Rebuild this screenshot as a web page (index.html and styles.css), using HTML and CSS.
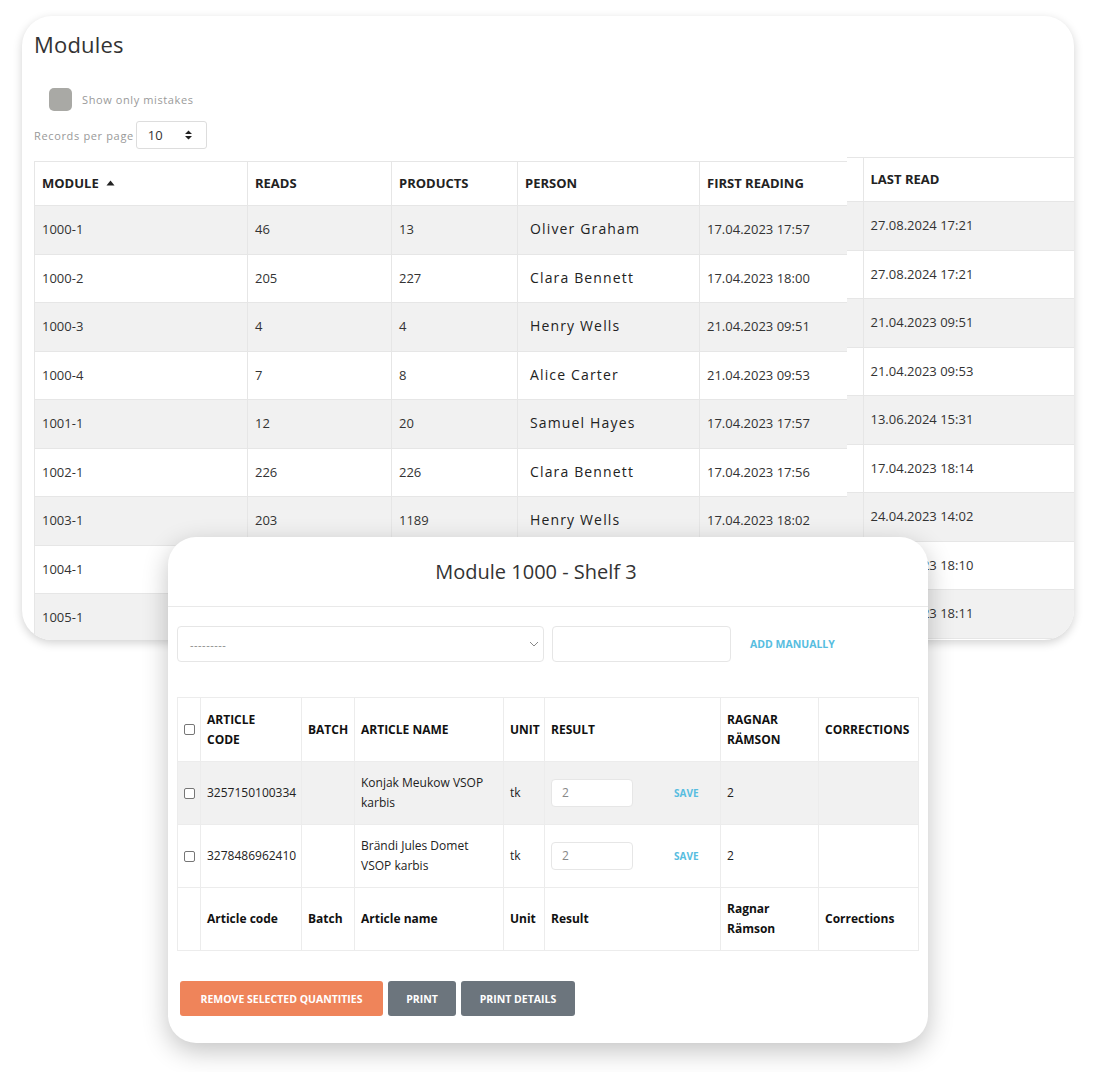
FILE: index.html
```html
<!DOCTYPE html>
<html lang="en">
<head>
<meta charset="utf-8">
<title>Modules</title>
<link rel="stylesheet" href="styles.css">
</head>
<body>
<div class="stage">
  <div class="card">
    <div class="left">
      <h1 class="title">Modules</h1>
      <div class="filter"><span class="toggle"></span><span class="filter-label">Show only mistakes</span></div>
      <div class="perpage">
        <span class="perpage-label">Records per page</span>
        <div class="num-select"><span>10</span>
          <svg class="updown" width="9" height="10" viewBox="0 0 9 10"><path d="M4.5 0.5 L8 4 H1 Z M4.5 9.5 L8 6 H1 Z" fill="#222"/></svg>
        </div>
      </div>
      <table class="grid main-grid">
        <colgroup><col class="c-module"><col class="c-reads"><col class="c-products"><col class="c-person"><col class="c-first"></colgroup>
        <thead>
          <tr><th>MODULE <svg class="sort" width="9" height="6" viewBox="0 0 9 6"><path d="M4.5 0.5 L8.5 5.5 H0.5 Z" fill="#222"/></svg></th><th>READS</th><th>PRODUCTS</th><th>PERSON</th><th>FIRST READING</th></tr>
        </thead>
        <tbody>
          <tr><td>1000-1</td><td>46</td><td>13</td><td class="person">Oliver Graham</td><td>17.04.2023 17:57</td></tr>
          <tr><td>1000-2</td><td>205</td><td>227</td><td class="person">Clara Bennett</td><td>17.04.2023 18:00</td></tr>
          <tr><td>1000-3</td><td>4</td><td>4</td><td class="person">Henry Wells</td><td>21.04.2023 09:51</td></tr>
          <tr><td>1000-4</td><td>7</td><td>8</td><td class="person">Alice Carter</td><td>21.04.2023 09:53</td></tr>
          <tr><td>1001-1</td><td>12</td><td>20</td><td class="person">Samuel Hayes</td><td>17.04.2023 17:57</td></tr>
          <tr><td>1002-1</td><td>226</td><td>226</td><td class="person">Clara Bennett</td><td>17.04.2023 17:56</td></tr>
          <tr><td>1003-1</td><td>203</td><td>1189</td><td class="person">Henry Wells</td><td>17.04.2023 18:02</td></tr>
          <tr><td>1004-1</td><td></td><td></td><td class="person"></td><td></td></tr>
          <tr><td>1005-1</td><td></td><td></td><td class="person"></td><td></td></tr>
        </tbody>
      </table>
    </div>
    <div class="right">
      <table class="grid last-grid">
        <colgroup><col class="c-gap"><col class="c-last"></colgroup>
        <thead><tr><th></th><th>LAST READ</th></tr></thead>
        <tbody>
          <tr><td></td><td>27.08.2024 17:21</td></tr>
          <tr><td></td><td>27.08.2024 17:21</td></tr>
          <tr><td></td><td>21.04.2023 09:51</td></tr>
          <tr><td></td><td>21.04.2023 09:53</td></tr>
          <tr><td></td><td>13.06.2024 15:31</td></tr>
          <tr><td></td><td>17.04.2023 18:14</td></tr>
          <tr><td></td><td>24.04.2023 14:02</td></tr>
          <tr><td></td><td>24.04.2023 18:10</td></tr>
          <tr><td></td><td>24.04.2023 18:11</td></tr>
        </tbody>
      </table>
    </div>
  </div>

  <div class="modal">
    <div class="modal-head">Module 1000 - Shelf 3</div>
    <div class="modal-body">
      <div class="form-row">
        <div class="field select-field"><span class="placeholder">---------</span>
          <svg width="10" height="6" viewBox="0 0 10 6"><path d="M1 1 L5 5 L9 1" fill="none" stroke="#888" stroke-width="1"/></svg>
        </div>
        <div class="field text-field"></div>
        <span class="link add-link">ADD MANUALLY</span>
      </div>
      <table class="items">
        <colgroup><col class="i-check"><col class="i-code"><col class="i-batch"><col class="i-name"><col class="i-unit"><col class="i-result"><col class="i-person"><col class="i-corr"></colgroup>
        <thead>
          <tr><th><span class="cb"></span></th><th>ARTICLE<br>CODE</th><th>BATCH</th><th>ARTICLE NAME</th><th>UNIT</th><th>RESULT</th><th>RAGNAR RÄMSON</th><th>CORRECTIONS</th></tr>
        </thead>
        <tbody>
          <tr class="shade"><td><span class="cb"></span></td><td>3257150100334</td><td></td><td>Konjak Meukow VSOP karbis</td><td>tk</td><td><div class="result"><span class="qty">2</span><span class="link save">SAVE</span></div></td><td>2</td><td></td></tr>
          <tr><td><span class="cb"></span></td><td>3278486962410</td><td></td><td>Brändi Jules Domet VSOP karbis</td><td>tk</td><td><div class="result"><span class="qty">2</span><span class="link save">SAVE</span></div></td><td>2</td><td></td></tr>
        </tbody>
        <tfoot>
          <tr><th></th><th>Article code</th><th>Batch</th><th>Article name</th><th>Unit</th><th>Result</th><th>Ragnar Rämson</th><th>Corrections</th></tr>
        </tfoot>
      </table>
      <div class="actions">
        <span class="btn btn-orange">REMOVE SELECTED QUANTITIES</span>
        <span class="btn btn-grey btn-print">PRINT</span>
        <span class="btn btn-grey btn-details">PRINT DETAILS</span>
      </div>
    </div>
  </div>
</div>
</body>
</html>
```

FILE: styles.css
```css
* { box-sizing: border-box; }
html, body { margin: 0; background: #fff; }
body { font-family: "Open Sans", "Liberation Sans", sans-serif; color: #333; }

.stage { position: relative; width: 1096px; height: 1072px; padding: 16px 22px 0 22px; }

.card {
  display: flex;
  width: 1052px;
  height: 624px;
  background: #fff;
  border-radius: 30px;
  overflow: hidden;
  box-shadow: 0 3px 10px rgba(0,0,0,0.18);
}

.left { width: 825px; flex: none; padding: 16px 0 0 12px; }
.right { flex: 1; padding-top: 141px; }

.title { margin: 0; font-size: 22px; line-height: 24px; font-weight: 400; color: #333; letter-spacing: 0.2px; }

.filter { display: flex; align-items: center; margin: 32px 0 0 15px; height: 23px; }
.toggle { width: 23px; height: 23px; border-radius: 5px; background: #a9a9a5; }
.filter-label { margin-left: 10px; font-size: 11px; color: #9a9a9a; letter-spacing: 0.6px; }

.perpage { display: flex; align-items: center; margin-top: 10px; height: 28px; }
.perpage-label { font-size: 11px; color: #999; margin-right: 2px; letter-spacing: 0.65px; }
.num-select {
  width: 71px; height: 28px; border: 1px solid #ddd; border-radius: 3px;
  display: flex; align-items: center; justify-content: space-between;
  padding: 0 13px 0 11px; font-size: 13px; color: #333;
}

.grid { border-collapse: collapse; table-layout: fixed; font-size: 13px; }
.grid th, .grid td { border: 1px solid #e6e6e6; padding: 0 7px; text-align: left; vertical-align: middle; white-space: nowrap; overflow: hidden; line-height: 18px; }
.grid th { height: 44px; font-weight: 700; color: #222; background: #fff; padding-bottom: 2px; }
.grid td { height: 48.5px; color: #333; padding-bottom: 1px; }
.grid tbody tr:nth-child(odd) td { background: #f1f1f1; }
.grid tbody tr:nth-child(even) td { background: #fff; }

.main-grid { width: 813px; margin-top: 12px; }
.main-grid th:first-child, .main-grid td:first-child { border-left: 1px solid #e6e6e6; }
.main-grid th:last-child, .main-grid td:last-child { border-right: none; }
.c-module { width: 213px; }
.c-reads { width: 144px; }
.c-products { width: 126px; }
.c-person { width: 182px; }
.c-first { width: 148px; }
.sort { margin-left: 4px; vertical-align: 2px; }
.person { font-size: 14px; letter-spacing: 1.15px; padding-left: 12px !important; color: #222 !important; }

.last-grid { width: 227px; }
.last-grid th:first-child, .last-grid td:first-child { border-left: none; }
.last-grid th:last-child, .last-grid td:last-child { border-right: none; }
.last-grid th:first-child { border-right: none; }
.c-gap { width: 16px; }
.c-last { width: 211px; }

/* modal */
.modal {
  position: absolute; left: 168px; top: 537px; width: 760px; height: 506px;
  background: #fff; border-radius: 28px;
  box-shadow: 0 8px 26px rgba(0,0,0,0.24);
}
.modal-head {
  height: 70px; border-bottom: 1px solid #e9e9e9;
  display: flex; align-items: center; justify-content: center;
  padding-right: 24px; font-size: 20px; color: #333;
}
.modal-body { padding: 19px 9px 0 9px; }
.form-row { display: flex; align-items: center; height: 36px; }
.field { height: 36px; border: 1px solid #e6e6e6; border-radius: 4px; }
.select-field { width: 367px; display: flex; align-items: center; justify-content: space-between; padding: 0 4px 0 12px; }
.placeholder { font-size: 11px; color: #888; letter-spacing: 0.5px; }
.text-field { width: 179px; margin-left: 8px; }
.link { color: #57bde0; font-weight: 700; }
.add-link { margin-left: 19px; font-size: 10.5px; }

.items { width: 741px; margin-top: 35px; border-collapse: collapse; table-layout: fixed; font-size: 12px; }
.items th, .items td { border: 1px solid #ececec; padding: 0 6px; text-align: left; vertical-align: middle; line-height: 20px; }
.items thead th { height: 64px; font-weight: 700; color: #111; }
.items td { height: 63px; color: #222; }
.items tfoot th { height: 63px; font-weight: 700; color: #111; }
.items tr.shade td { background: #f1f1f1; }
.items th:first-child, .items td:first-child { padding: 0 0 0 6px; }
.i-check { width: 23px; }
.i-code { width: 101px; }
.i-batch { width: 53px; }
.i-name { width: 149px; }
.i-unit { width: 41px; }
.i-result { width: 176px; }
.i-person { width: 98px; }
.i-corr { width: 100px; }

.cb { display: block; width: 11px; height: 11px; border: 1px solid #767676; border-radius: 2px; background: #fff; }
.result { display: flex; align-items: center; }
.qty { width: 82px; height: 28px; border: 1px solid #e6e6e6; border-radius: 4px; background: #fff; padding-left: 10px; line-height: 26px; color: #888; }
.save { margin-left: 41px; font-size: 10px; }

.actions { display: flex; gap: 5px; margin: 30px 0 0 3px; }
.btn { height: 35px; display: flex; align-items: center; justify-content: center; color: #fff; font-size: 10.5px; font-weight: 700; border-radius: 3px; }
.btn-orange { width: 203px; background: #ef845a; }
.btn-grey { background: #6c757d; }
.btn-print { width: 68px; }
.btn-details { width: 114px; }
```
